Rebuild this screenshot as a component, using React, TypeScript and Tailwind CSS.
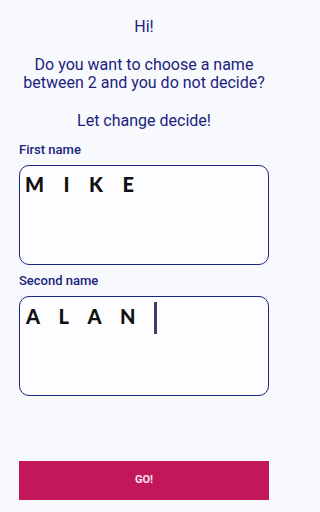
export default function App() {
  return (
    <div className="w-full min-h-[512px] bg-[#f8f9fd]">
      <div className="w-[288px] h-[512px] flex flex-col px-[19px] overflow-hidden" style={{ fontFamily: "Roboto, 'Noto Sans', sans-serif" }}>
        <div className="pt-[18px] text-center text-[16px] leading-[18.75px] text-[#1a237e]">
          <div>Hi!</div>
          <div>&nbsp;</div>
          <div>Do you want to choose a name</div>
          <div>between 2 and you do not decide?</div>
          <div>&nbsp;</div>
          <div>Let change decide!</div>
        </div>
        <div className="mt-[11px] text-[13px] leading-[16px] font-medium text-[#1a237e]">First name</div>
        <div className="mt-[7px] h-[100px] rounded-[10px] border-[1.5px] border-[#1a237e] bg-[#fdfdff] px-[5px] pt-[6px]">
          <div className="text-[20px] leading-[24px] font-black tracking-[19.5px] text-[#111]" style={{ fontFamily: "Lato, sans-serif" }}>MIKE</div>
        </div>
        <div className="mt-[8px] text-[13px] leading-[16px] font-medium text-[#1a237e]">Second name</div>
        <div className="mt-[7px] h-[100px] rounded-[10px] border-[1.5px] border-[#1a237e] bg-[#fdfdff] px-[6px] pt-[5px]">
          <div className="flex items-start">
            <span className="mt-[2px] text-[20px] leading-[24px] font-black tracking-[18.5px] text-[#111]" style={{ fontFamily: "Lato, sans-serif" }}>ALAN</span>
            <span className="inline-block w-[2.5px] h-[32px] bg-[#3d3d6e]"></span>
          </div>
        </div>
        <button className="mt-[65px] h-[39px] w-full bg-[#c2185b] text-[#fde4ef] text-[11px] font-bold">GO!</button>
      </div>
    </div>
  );
}
